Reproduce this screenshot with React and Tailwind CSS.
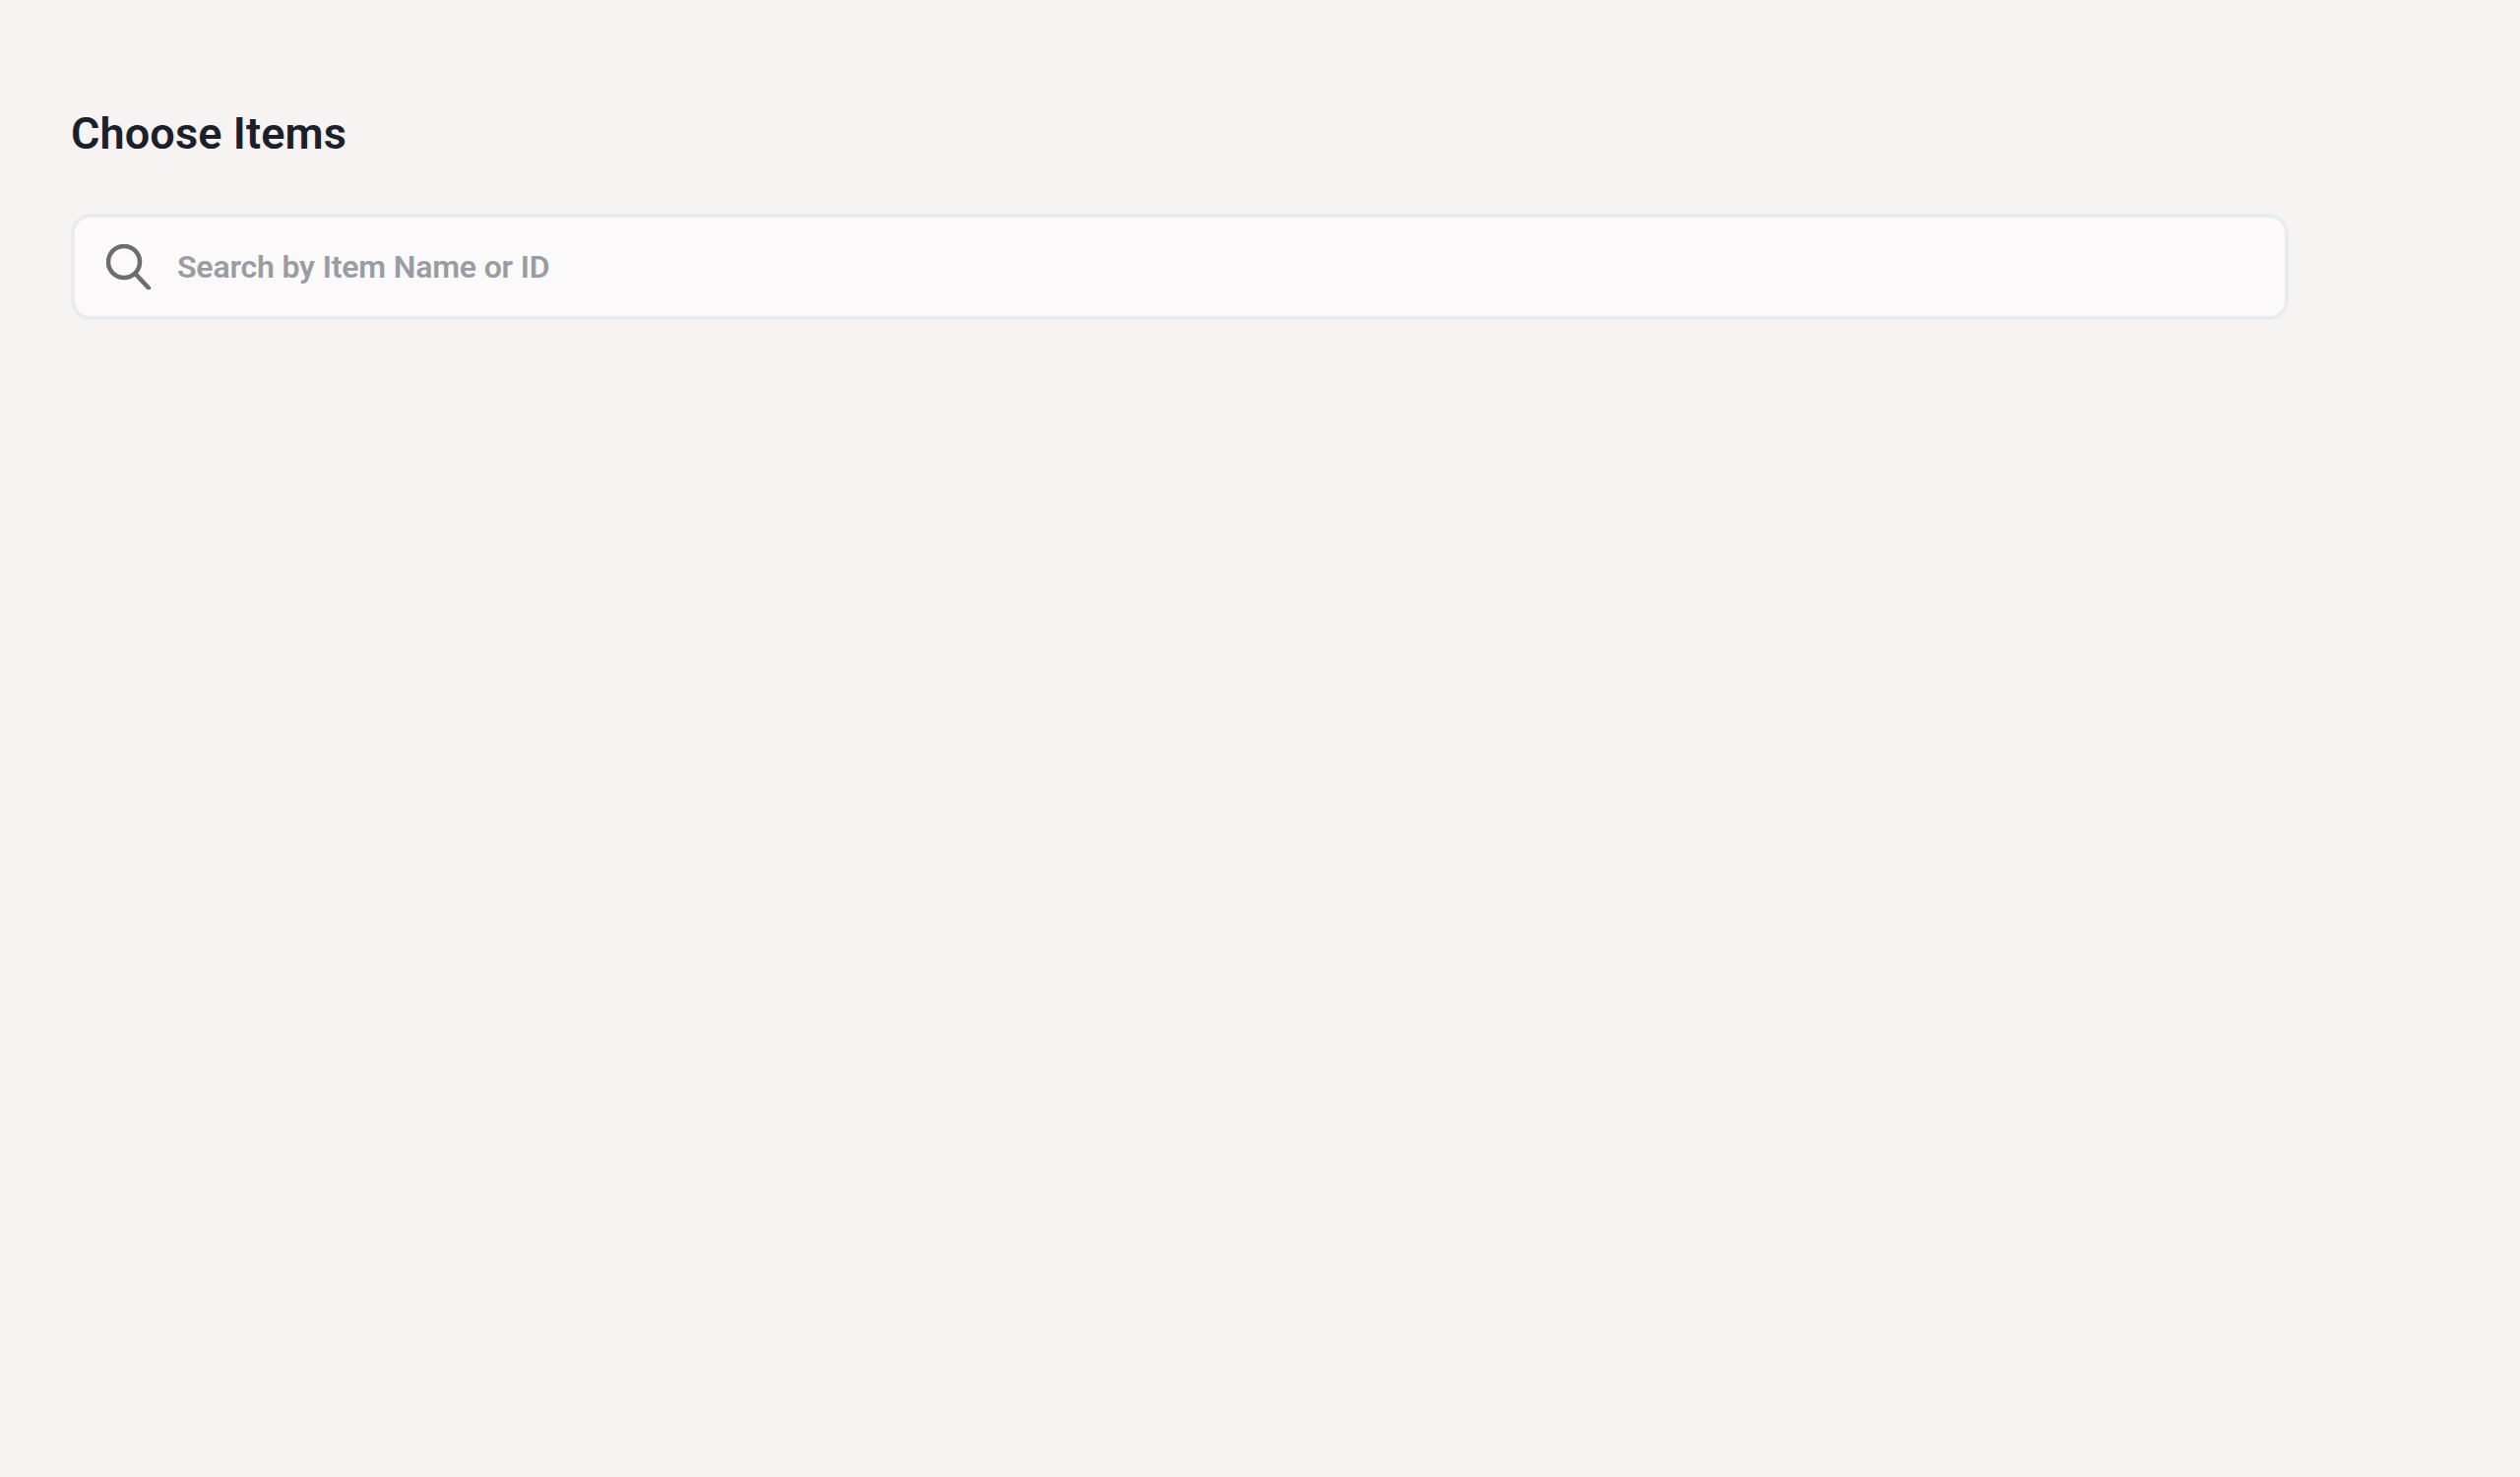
export default function App() {
  return (
    <div className="min-h-[1500px] w-[2560px] bg-[#f7f3f2] pt-[108px] pl-[72px] font-['Roboto',sans-serif]">
      <h1 className="text-[45px] leading-[56px] font-semibold tracking-[0.12px] text-[#1a202c] m-0">Choose Items</h1>
      <div className="mt-[53px] w-[2253px] h-[108px] flex items-center rounded-[20px] border-[4px] border-[#e9ecee] bg-[#fbf9fa] pl-[32px]">
        <svg width="46" height="46" viewBox="0 0 46 46" fill="none" className="shrink-0">
          <circle cx="18" cy="18" r="16" stroke="#6b6d72" strokeWidth="4.5" />
          <path d="M29.5 30 L43 44.5" stroke="#6b6d72" strokeWidth="4.5" strokeLinecap="round" />
        </svg>
        <input
          className="ml-[26px] flex-1 bg-transparent outline-none text-[32px] tracking-[-0.17px] font-semibold text-[#1a202c] placeholder:text-[#9a9ca3]"
          placeholder="Search by Item Name or ID"
        />
      </div>
    </div>
  );
}
